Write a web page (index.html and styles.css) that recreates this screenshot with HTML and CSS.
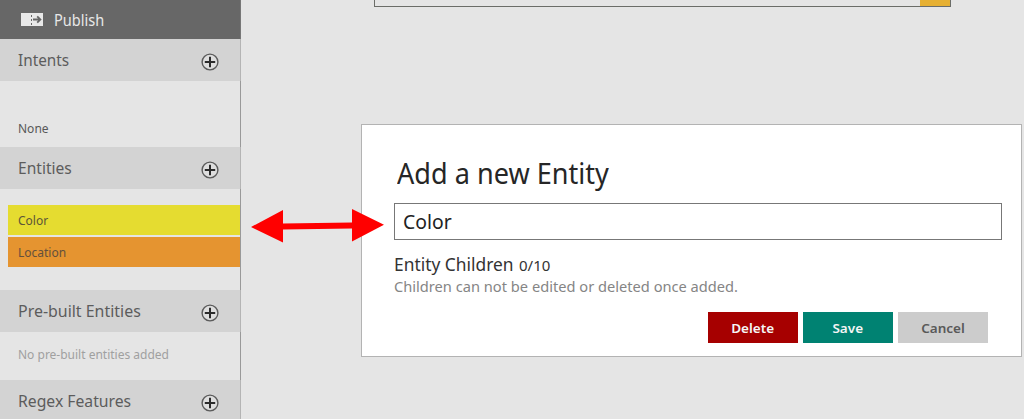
FILE: index.html
```html
<!DOCTYPE html>
<html lang="en">
<head>
<meta charset="utf-8">
<title>Entities</title>
<link rel="stylesheet" href="styles.css">
</head>
<body>
<svg width="0" height="0" class="defs"><symbol id="plus" viewBox="0 0 20 20"><circle cx="10" cy="10" r="7.9" fill="#dedede" stroke="#5b5b5b" stroke-width="1.4"/><path d="M10 4.8V15.2M4.8 10H15.2" stroke="#2b2b2b" stroke-width="2"/></symbol></svg>
<div class="app">
  <nav class="sidebar">
    <div class="publish">
      <svg class="publish-icon" width="22" height="13" viewBox="0 0 22 13"><path d="M0 0H10V13H0ZM11 0H22V13H11Z" fill="#e8e8e8"/><path d="M10.5 0V13" stroke="#e8e8e8" stroke-dasharray="2 2"/><path d="M12 6.5H19M16.2 3.3L19.4 6.5L16.2 9.7" fill="none" stroke="#666" stroke-width="1.8"/></svg>
      <span class="t-publish">Publish</span>
    </div>
    <div class="band"><span class="t-intents">Intents</span><svg class="plus"><use href="#plus"/></svg></div>
    <div class="intent-list"><span class="t-none">None</span></div>
    <div class="band"><span class="t-entities">Entities</span><svg class="plus"><use href="#plus"/></svg></div>
    <div class="entity-list">
      <div class="entity yellow"><span class="t-color">Color</span></div>
      <div class="entity orange"><span class="t-location">Location</span></div>
    </div>
    <div class="band"><span class="t-prebuilt">Pre-built Entities</span><svg class="plus"><use href="#plus"/></svg></div>
    <div class="empty"><span class="t-empty">No pre-built entities added</span></div>
    <div class="band"><span class="t-regex">Regex Features</span><svg class="plus"><use href="#plus"/></svg></div>
  </nav>
  <main class="main">
    <div class="search"><div class="search-button"></div></div>
    <section class="dialog">
      <h1 class="title"><span class="t-title">Add a new Entity</span></h1>
      <div class="field"><span class="t-field">Color</span></div>
      <div class="children"><span class="t-children">Entity Children</span><span class="t-count">0/10</span></div>
      <div class="hint"><span class="t-hint">Children can not be edited or deleted once added.</span></div>
      <div class="actions">
        <div class="button delete"><span class="t-delete">Delete</span></div>
        <div class="button save"><span class="t-save">Save</span></div>
        <div class="button cancel"><span class="t-cancel">Cancel</span></div>
      </div>
    </section>
  </main>
</div>
<svg class="arrow" width="136" height="34" viewBox="0 0 136 34"><path d="M1 18L33 1V14.6L102 13.4V0L134 15.8L102 32.5V19.4L33 20.5V33.5Z" fill="#f00"/></svg>
</body>
</html>
```
FILE: styles.css
```css
* { box-sizing: border-box; }
body { margin: 0; background: #e5e5e5; font-family: "Noto Sans", "Open Sans", sans-serif; overflow: hidden; }
span { display: inline-block; white-space: nowrap; transform-origin: left center; }
.defs { position: absolute; }
.app { display: flex; height: 419px; overflow: hidden; }
.sidebar { width: 241px; flex: none; background: linear-gradient(#999, #999) right / 1px 100% no-repeat; }
.publish { height: 39px; background: #676767; border-right: 1px solid #777; color: #e8e8e8; display: flex; align-items: center; gap: 11px; padding-left: 21px; font-size: 16px; }
.publish-icon { display: block; }
.t-publish { transform: scaleX(.91); }
.band { height: 42px; background: #d3d3d3; border-right: 1px solid #b4b4b4; color: #5c5c5c; display: flex; align-items: center; justify-content: space-between; padding: 0 20px 0 18px; font-size: 17px; }
.band span { padding-bottom: 1px; }
.t-intents { transform: scaleX(.9); }
.t-entities { transform: scaleX(.915); }
.t-prebuilt { transform: scaleX(.937); }
.t-regex { transform: scaleX(.925); }
.plus { width: 20px; height: 20px; margin-top: 3px; }
.intent-list { height: 66px; padding: 39px 0 0 18px; font-size: 12px; line-height: 18px; color: #585858; }
.entity-list { height: 101px; padding: 16px 1px 0 8px; display: flex; flex-direction: column; gap: 2px; }
.entity { height: 30px; display: flex; align-items: center; padding-left: 10px; font-size: 12px; color: #5c5638; }
.yellow { background: #e5dc30; }
.orange { background: #e59430; color: #64503c; }
.empty { height: 48px; padding: 14px 0 0 18px; font-size: 12px; line-height: 18px; color: #a0a0a0; }
.main { flex: 1; padding-left: 120px; }
.search { height: 7px; margin-left: 13px; width: 577px; border: solid #6b6d68; border-width: 0 1px 1px 1px; display: flex; justify-content: flex-end; }
.search-button { width: 30px; background: #e6b033; }
.dialog { width: 661px; height: 233px; margin-top: 117px; border: 1px solid #b3b3b3; background: #fff; padding: 28px 19px 0 32px; }
.title { margin: 0; padding-left: 3px; height: 50px; line-height: 40px; font-size: 29px; font-weight: 400; color: #262626; }
.t-title { transform: scaleX(.934); }
.field { height: 37px; width: 608px; border: 1px solid #777; padding-left: 8px; line-height: 37px; font-size: 19px; color: #222; }
.t-field { transform: scaleX(1.02); }
.children { height: 26px; padding-top: 12px; line-height: 24px; color: #333; font-size: 18px; display: flex; align-items: baseline; }
.t-children { width: 125px; transform: scaleX(.965); }
.t-count { font-size: 15px; }
.hint { height: 46px; padding-top: 10px; line-height: 20px; font-size: 15px; color: #858585; }
.t-hint { transform: scaleX(.976); }
.actions { display: flex; gap: 5px; padding-left: 314px; }
.button { width: 90px; height: 31px; display: flex; align-items: center; justify-content: center; font-size: 13px; font-weight: 600; color: #f5f5f5; }
.button span { transform-origin: center; transform: scaleX(1.04); }
.delete { background: #a60000; }
.save { background: #008272; }
.cancel { background: #ccc; color: #595959; }
.arrow { position: absolute; left: 250px; top: 209px; }
```
